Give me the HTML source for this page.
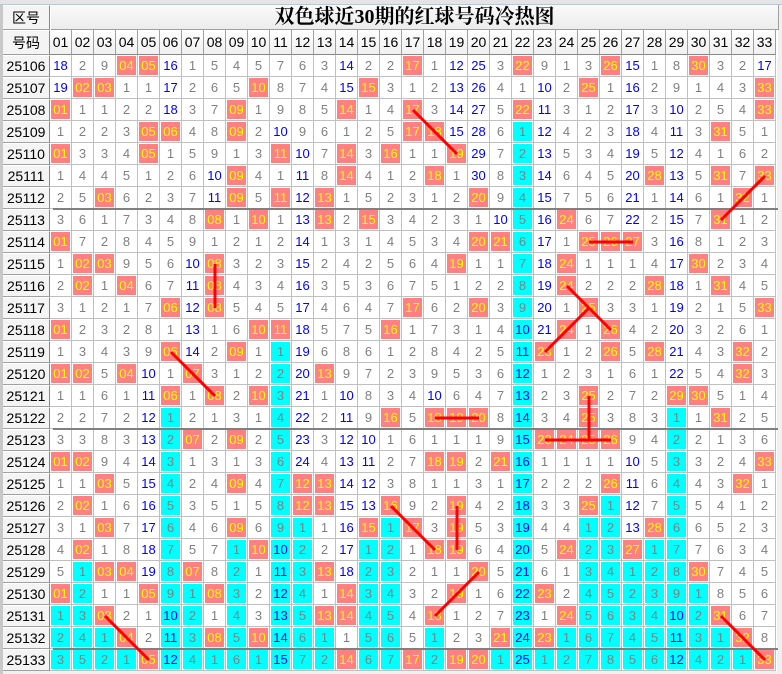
<!DOCTYPE html>
<html><head><meta charset="utf-8">
<style>
html,body{margin:0;padding:0;}
body{width:782px;height:674px;background:#f0f0f0;position:relative;overflow:hidden;font-family:"Liberation Sans","Noto Sans CJK SC",sans-serif;}
.c{position:absolute;box-sizing:border-box;font-size:13px;text-align:center;line-height:22px;}
.lab{position:absolute;box-sizing:border-box;background:#f4f4f4;border-right:1px solid #888;border-bottom:1px solid #a0a0a0;border-top:1px solid #fff;font-size:14px;text-align:center;color:#000;}
</style></head><body>
<div style="position:absolute;left:0;top:0;width:782px;height:4px;background:#e4e4e4;border-bottom:1px solid #b8c8d8"></div>
<div style="position:absolute;left:0;top:5px;width:3px;height:669px;background:#c8c8c8"></div>
<div id="g"></div>
<script>
var rows=[
"18 2 9 *04 *05 16 1 5 4 5 7 6 3 14 2 2 *17 1 12 25 3 *22 9 1 3 *26 15 1 8 *30 3 2 17",
"19 *02 *03 1 1 17 2 6 5 *10 8 7 4 15 *15 3 1 2 13 26 4 1 10 2 *25 1 16 2 9 1 4 3 *33",
"*01 1 1 2 2 18 3 7 *09 1 9 8 5 *14 1 4 *17 3 14 27 5 *22 11 3 1 2 17 3 10 2 5 4 *33",
"1 2 2 3 *05 *06 4 8 *09 2 10 9 6 1 2 5 *17 *18 15 28 6 c1 12 4 2 3 18 4 11 3 *31 5 1",
"*01 3 3 4 *05 1 5 9 1 3 *11 10 7 *14 3 *16 1 1 *19 29 7 c2 13 5 3 4 19 5 12 4 1 6 2",
"1 4 4 5 1 2 6 10 *09 4 1 11 8 *14 4 1 2 *18 1 30 8 c3 14 6 4 5 20 *28 13 5 *31 7 *33",
"2 5 *03 6 2 3 7 11 *09 5 *11 12 *13 1 5 2 3 1 2 *20 9 c4 15 7 5 6 21 1 14 6 1 *32 1",
"3 6 1 7 3 4 8 *08 1 *10 1 13 *13 2 *15 3 4 2 3 1 10 c5 16 *24 6 7 22 2 15 7 *31 1 2",
"*01 7 2 8 4 5 9 1 2 1 2 14 1 3 1 4 5 3 4 *20 *21 c6 17 1 *25 *26 *27 3 16 8 1 2 3",
"1 *02 *03 9 5 6 10 *08 3 2 3 15 2 4 2 5 6 4 *19 1 1 c7 18 *24 1 1 1 4 17 *30 2 3 4",
"2 *02 1 *04 6 7 11 *08 4 3 4 16 3 5 3 6 7 5 1 2 2 c8 19 *24 2 2 2 *28 18 1 *31 4 5",
"3 1 2 1 7 *06 12 *08 5 4 5 17 4 6 4 7 *17 6 2 *20 3 c9 20 1 *25 3 3 1 19 2 1 5 *33",
"*01 2 3 2 8 1 13 1 6 *10 *11 18 5 7 5 *16 1 7 3 1 4 c10 21 *24 1 *26 4 2 20 3 2 6 1",
"1 3 4 3 9 *06 14 2 *09 1 c1 19 6 8 6 1 2 8 4 2 5 c11 *23 1 2 *26 5 *28 21 4 3 *32 2",
"*01 *02 5 *04 10 1 *07 3 1 2 c2 20 *13 9 7 2 3 9 5 3 6 c12 1 2 3 1 6 1 22 5 4 *32 3",
"1 1 6 1 11 *06 1 *08 2 *10 c3 21 1 10 8 3 4 10 6 4 7 c13 2 3 *25 2 7 2 *29 *30 5 1 4",
"2 2 7 2 12 c1 2 1 3 1 c4 22 2 11 9 *16 5 *18 *19 *20 8 c14 3 4 *25 3 8 3 c1 1 *31 2 5",
"3 3 8 3 13 c2 *07 2 *09 2 c5 23 3 12 10 1 6 1 1 1 9 c15 *23 *24 *25 *26 9 4 c2 2 1 3 6",
"*01 *02 9 4 14 c3 1 3 1 3 c6 24 4 13 11 2 7 *18 *19 2 *21 c16 1 1 1 1 10 5 c3 3 2 4 *33",
"1 1 *03 5 15 c4 2 4 *09 4 c7 *12 *13 14 12 3 8 1 1 3 1 c17 2 2 2 *26 11 6 c4 4 3 *32 1",
"2 *02 1 6 16 c5 3 5 1 5 c8 *12 *13 15 13 *16 9 2 *19 4 2 c18 3 3 *25 c1 12 7 c5 5 4 1 2",
"3 1 *03 7 17 c6 4 6 *09 6 c9 c1 1 16 *15 c1 *17 3 *19 5 3 c19 4 4 c1 c2 13 *28 c6 6 5 2 3",
"4 *02 1 8 18 c7 5 7 c1 *10 c10 c2 2 17 c1 c2 1 *18 *19 6 4 c20 5 *24 c2 c3 *27 c1 c7 7 6 3 4",
"5 c1 *03 *04 19 c8 *07 8 c2 1 c11 c3 *13 18 c2 c3 2 1 1 *20 5 c21 6 1 c3 c4 c1 c2 c8 *30 7 4 5",
"*01 c2 1 1 *05 c9 c1 *08 c3 2 c12 c4 1 *14 c3 c4 3 2 *19 1 6 c22 *23 2 c4 c5 c2 c3 c9 c1 8 5 6",
"c1 c3 *03 2 1 c10 c2 1 c4 3 c13 c5 *13 *14 c4 c5 4 *18 1 2 7 c23 1 *24 c5 c6 c3 c4 c10 c2 *31 6 7",
"c2 c4 c1 *04 2 c11 c3 *08 c5 *10 c14 c6 c1 1 c5 c6 5 c1 2 3 *21 c24 *23 c1 c6 c7 c4 c5 c11 c3 c1 *32 8",
"c3 c5 c2 c1 *05 c12 c4 c1 c6 c1 c15 c7 c2 *14 c6 c7 *17 c2 *19 *20 c1 c25 c1 c2 c7 c8 c5 c6 c12 c4 c2 c1 *33"
];
var h='';
h+='<div style="position:absolute;left:50px;top:5px;width:728px;height:54px;background:#fff"></div>';
h+='<div style="position:absolute;left:50px;top:55px;width:727px;height:616px;background:#fff"></div>';
// title
h+='<div style="position:absolute;left:51px;top:5px;width:727px;height:24px;background:linear-gradient(#fafafa,#ececec);border-bottom:1px solid #a0a0a0;border-right:1px solid #a0a0a0;font-family:\'Liberation Serif\',\'Noto Serif CJK SC\',serif;font-weight:bold;font-size:20px;line-height:24px;text-align:center;color:#000;">双色球近30期的红球号码冷热图</div>';
h+='<div class="lab" style="left:3px;top:5px;width:47px;height:25px;line-height:24px">区号</div>';
h+='<div class="lab" style="left:3px;top:30px;width:47px;height:25px;line-height:24px">号码</div>';
for(var n=1;n<=33;n++){
 var x=50+(n-1)*22;
 h+='<div class="c" style="left:'+x+'px;top:30px;width:22px;height:25px;line-height:24px;font-size:14px;color:#000;background:linear-gradient(#fff,#f0f0f0);border-right:1px solid #a0a0a0;border-bottom:1px solid #888">'+(n<10?'0'+n:n)+'</div>';
}
for(var r=0;r<rows.length;r++){
 var y=55+r*22;
 h+='<div class="lab" style="left:3px;top:'+y+'px;width:47px;height:22px;line-height:20px">'+(25106+r)+'</div>';
 var t=rows[r].split(' ');
 for(var k=0;k<33;k++){
  var v=t[k],x=50+k*22,bg='',col;
  if(v[0]=='*'){v=v.slice(1);bg='#ff8080';col='#ffff00';}
  else{ if(v[0]=='c'){v=v.slice(1);bg='#00ffff';} col=(+v>=10)?'#0000ff':'#808080';}
  h+='<div class="c" style="left:'+x+'px;top:'+y+'px;width:22px;height:22px;border-right:1px solid #c0c0c0;border-bottom:1px solid #c0c0c0;color:'+col+'">'+
   (bg?'<div style="position:absolute;left:1px;top:1px;width:19px;height:19px;background:'+bg+'"></div>':'')+
   '<span style="position:relative">'+v+'</span></div>';
 }
}
[7,17,27].forEach(function(r){h+='<div style="position:absolute;left:53px;top:'+(55+r*22-1)+'px;width:725px;height:2px;background:#808080"></div>';});
// red lines
function cx(n){return 61+(n-1)*22;}function cy(r){return 66+(r-25106)*22;}
var L=[[25108,17,25110,19],[25111,33,25113,31],[25114,25,25114,27],[25115,8,25117,8],[25116,24,25118,26],[25119,23,25117,25],[25119,6,25121,8],[25122,18,25122,20],[25121,25,25123,25],[25123,23,25123,26],[25126,16,25128,18],[25126,19,25128,19],[25129,20,25131,18],[25131,3,25133,5],[25131,31,25133,33]];
var s='<svg style="position:absolute;left:0;top:0" width="782" height="674">';
L.forEach(function(a){s+='<line x1="'+cx(a[1])+'" y1="'+cy(a[0])+'" x2="'+cx(a[3])+'" y2="'+cy(a[2])+'" stroke="#ff0000" stroke-width="3"/>';});
s+='</svg>';
h+=s;
document.getElementById('g').innerHTML=h;
</script>
</body></html>
